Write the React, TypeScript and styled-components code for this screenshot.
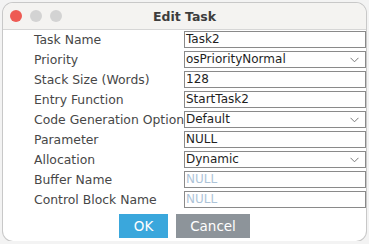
import React from "react";
import styled, { createGlobalStyle } from "styled-components";

const GlobalStyle = createGlobalStyle`
  html, body {
    margin: 0;
    padding: 0;
    background: #f3f3f3;
  }
`;

const Window = styled.div`
  margin: 3px 0 0 3px;
  width: 363px;
  height: 238px;
  border-radius: 10px;
  background: #ffffff;
  box-shadow: 0 0 0 1px #c8c8c8;
  overflow: hidden;
  font-family: "DejaVu Sans", "Open Sans", sans-serif;
`;

const TitleBar = styled.div`
  height: 26px;
  background: #f4f3f1;
  border-bottom: 1px solid #d6d6d6;
  display: flex;
  align-items: center;
  position: relative;
`;

const Lights = styled.div`
  display: flex;
  gap: 8px;
  padding-left: 7px;
`;

const Light = styled.span<{ $color: string }>`
  width: 12px;
  height: 12px;
  border-radius: 50%;
  background: ${(p) => p.$color};
`;

const Title = styled.div`
  position: absolute;
  left: 0;
  right: 0;
  text-align: center;
  font-size: 12.5px;
  font-weight: bold;
  color: #3d3d3d;
`;

const Form = styled.div`
  display: grid;
  grid-template-columns: 150px 182px;
  grid-auto-rows: 20px;
  padding: 1px 0 0 31px;
`;

const Label = styled.div`
  font-size: 12.4px;
  color: #474747;
  line-height: 18px;
  white-space: nowrap;
`;

const Field = styled.div<{ $empty?: boolean }>`
  height: 15px;
  border: 1.5px solid #8a8a8a;
  font-size: 12px;
  line-height: 15px;
  padding-left: 1px;
  color: ${(p) => (p.$empty ? "#aec4d8" : "#1f1f1f")};
  display: flex;
  align-items: center;
  justify-content: space-between;
`;

const Chevron = styled.svg`
  margin-right: 6px;
`;

const Buttons = styled.div`
  display: flex;
  justify-content: center;
  gap: 8px;
  margin-top: 3px;
`;

const Button = styled.button<{ $primary?: boolean }>`
  height: 24px;
  border: none;
  padding: 0;
  width: ${(p) => (p.$primary ? "49px" : "74px")};
  background: ${(p) => (p.$primary ? "#3aa7dc" : "#8d949a")};
  color: #ffffff;
  font-family: "DejaVu Sans", "Open Sans", sans-serif;
  font-size: 13.5px;
`;

const rows: { label: string; value: string; select?: boolean; empty?: boolean }[] = [
  { label: "Task Name", value: "Task2" },
  { label: "Priority", value: "osPriorityNormal", select: true },
  { label: "Stack Size (Words)", value: "128" },
  { label: "Entry Function", value: "StartTask2" },
  { label: "Code Generation Option", value: "Default", select: true },
  { label: "Parameter", value: "NULL" },
  { label: "Allocation", value: "Dynamic", select: true },
  { label: "Buffer Name", value: "NULL", empty: true },
  { label: "Control Block Name", value: "NULL", empty: true },
];

export default function App() {
  return (
    <>
      <GlobalStyle />
      <Window>
        <TitleBar>
          <Lights>
            <Light $color="#ee5b54" />
            <Light $color="#d3d3d3" />
            <Light $color="#d3d3d3" />
          </Lights>
          <Title>Edit Task</Title>
        </TitleBar>
        <Form>
          {rows.map((r) => (
            <React.Fragment key={r.label}>
              <Label>{r.label}</Label>
              <Field $empty={r.empty}>
                <span>{r.value}</span>
                {r.select && (
                  <Chevron width="9" height="6" viewBox="0 0 9 6">
                    <path d="M0.5 0.8 L4.5 4.8 L8.5 0.8" fill="none" stroke="#7a7a7a" strokeWidth="1" />
                  </Chevron>
                )}
              </Field>
            </React.Fragment>
          ))}
        </Form>
        <Buttons>
          <Button $primary>OK</Button>
          <Button>Cancel</Button>
        </Buttons>
      </Window>
    </>
  );
}
